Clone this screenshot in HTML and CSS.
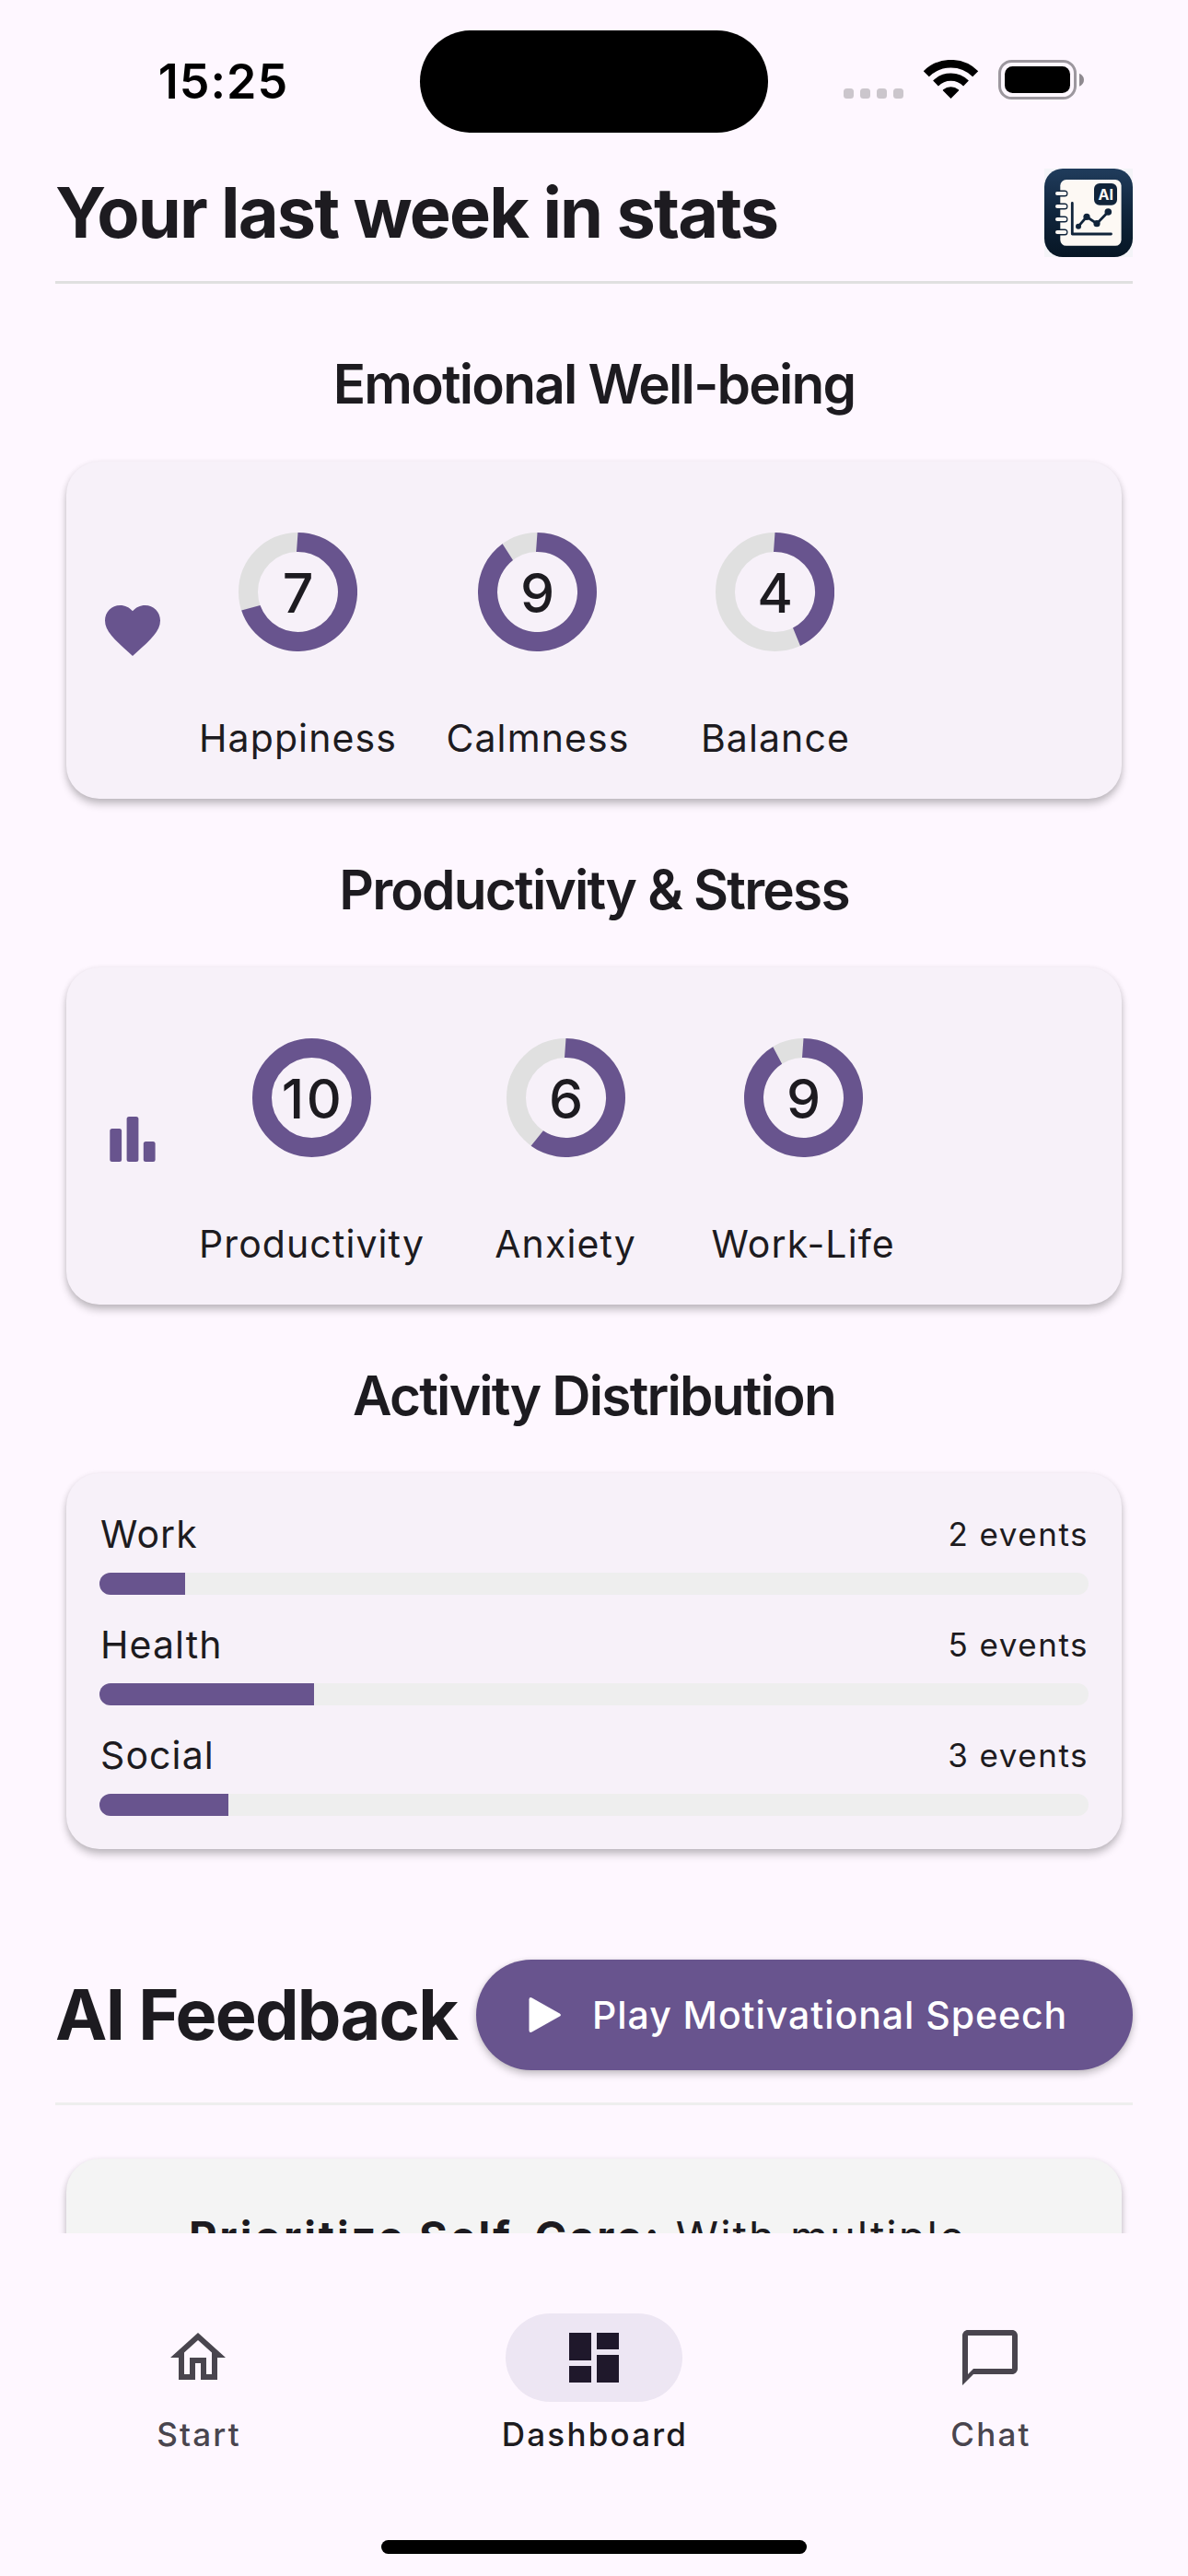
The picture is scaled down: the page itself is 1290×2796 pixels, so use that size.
FILE: index.html
```html
<!DOCTYPE html>
<html lang="en">
<head>
<meta charset="utf-8">
<title>Dashboard</title>
<link rel="stylesheet" href="styles.css">
</head>
<body>
<div class="screen">
  <div class="scroll">
    <div class="status">
      <div class="time">15:25</div>
      <div class="island"></div>
      <svg class="indicators" width="262" height="43" viewBox="0 0 262 43">
        <g fill="#cbc6cc">
          <rect x="0" y="31" width="11" height="11" rx="3.5"/>
          <rect x="18" y="31" width="11" height="11" rx="3.5"/>
          <rect x="36" y="31" width="11" height="11" rx="3.5"/>
          <rect x="54" y="31" width="11" height="11" rx="3.5"/>
        </g>
        <g transform="translate(88 0)">
          <path d="M1.8 15.3A37.7 37.7 0 0 1 55.2 15.3" fill="none" stroke="#000" stroke-width="8.6"/>
          <path d="M12 25.5A23.3 23.3 0 0 1 45 25.5" fill="none" stroke="#000" stroke-width="8.2"/>
          <path d="M28.5 42L19.8 33.3Q19.6 32.6 20.2 32.2A13.5 13.5 0 0 1 36.8 32.2Q37.4 32.6 37.2 33.3Z"/>
        </g>
        <rect x="169.5" y="1.5" width="82" height="40" rx="13" fill="none" stroke="#9c979e" stroke-width="3"/>
        <rect x="175" y="7" width="71" height="29" rx="8.5"/>
        <path d="M256 14.7Q261 17 261 21.7T256 28.7Z" fill="#8f8a90"/>
      </svg>
    </div>

    <header class="top">
      <h1 class="title">Your last week in stats</h1>
      <svg class="logo" width="96" height="96" viewBox="0 0 96 96">
        <defs>
          <linearGradient id="navy" x1="0" y1="0" x2="0" y2="1">
            <stop offset="0" stop-color="#203c5c"/>
            <stop offset=".5" stop-color="#10253c"/>
            <stop offset="1" stop-color="#071624"/>
          </linearGradient>
        </defs>
        <rect width="96" height="96" fill="#f4f4f8"/>
        <rect width="96" height="96" rx="20" fill="url(#navy)"/>
        <rect x="17.3" y="12" width="66.3" height="71.8" rx="6.5" fill="#fdf9f4"/>
        <g stroke="#10243a" stroke-width="7" stroke-linecap="round">
          <path d="M17 27H22M17 41H22M17 55H22M17 69H22"/>
        </g>
        <g stroke="#fdf9f4" stroke-width="4" stroke-linecap="round">
          <path d="M14 27H22.3M14 41H22.3M14 55H22.3M14 69H22.3"/>
        </g>
        <path d="M30.3 37.5V71H72.5" fill="none" stroke="#10243a" stroke-width="2.8" stroke-linecap="round" stroke-linejoin="round"/>
        <path d="M37 62.7L46 52.3L57 59.7L69.3 47" fill="none" stroke="#10243a" stroke-width="2.8"/>
        <g fill="#10243a">
          <circle cx="37" cy="62.7" r="3"/><circle cx="46" cy="52.3" r="3.6"/><circle cx="57" cy="59.7" r="3.6"/><circle cx="69.3" cy="47" r="3.8"/>
          <rect x="54" y="16" width="25" height="23.7" rx="6"/>
        </g>
        <text class="logo-text" x="66.7" y="33.8" text-anchor="middle">AI</text>
      </svg>
    </header>
    <div class="rule"></div>

    <h2 class="heading first">Emotional Well-being</h2>
    <section class="card metrics">
      <svg class="metric-icon" width="72" height="72" viewBox="0 0 24 24"><path d="M12 21.35l-1.45-1.32C5.4 15.36 2 12.28 2 8.5 2 5.42 4.42 3 7.5 3c1.74 0 3.41.81 4.5 2.09C13.09 3.81 14.76 3 16.5 3 19.58 3 22 5.42 22 8.5c0 3.78-3.4 6.86-8.55 11.54L12 21.35z"/></svg>
      <div class="metric">
        <svg class="ring" viewBox="0 0 129 129"><circle class="ring-track" cx="64.5" cy="64.5" r="54"/><path class="ring-value" d="M64.5 0A64.5 64.5 0 1 1 3.2 84.4L23.5 79A43.5 43.5 0 1 0 63 21Z"/><text class="ring-text" x="64.5" y="86.500">7</text></svg>
        <div class="label">Happiness</div>
      </div>
      <div class="metric">
        <svg class="ring" viewBox="0 0 129 129"><circle class="ring-track" cx="64.5" cy="64.5" r="54"/><path class="ring-value" d="M64.5 0A64.5 64.5 0 1 1 26.6 12.3L38 30A43.5 43.5 0 1 0 63 21Z"/><text class="ring-text" x="64.5" y="86.500">9</text></svg>
        <div class="label">Calmness</div>
      </div>
      <div class="metric">
        <svg class="ring" viewBox="0 0 129 129"><circle class="ring-track" cx="64.5" cy="64.5" r="54"/><path class="ring-value" d="M64.5 0A64.5 64.5 0 0 1 92 122.9L84 103.4A43.5 43.5 0 0 0 63 21Z"/><text class="ring-text" x="64.5" y="86.500">4</text></svg>
        <div class="label">Balance</div>
      </div>
    </section>

    <h2 class="heading">Productivity &amp; Stress</h2>
    <section class="card metrics">
      <svg class="metric-icon" width="72" height="72" viewBox="0 0 72 72"><rect x="11.3" y="28" width="12.8" height="36" rx="2.500"/><rect x="29.6" y="15" width="12.8" height="49" rx="2.500"/><rect x="47.8" y="42" width="12.8" height="22" rx="2.500"/></svg>
      <div class="metric">
        <svg class="ring" viewBox="0 0 129 129"><circle class="ring-full" cx="64.5" cy="64.5" r="54"/><text class="ring-text ring-text-wide" x="65.5" y="86.500">10</text></svg>
        <div class="label">Productivity</div>
      </div>
      <div class="metric">
        <svg class="ring" viewBox="0 0 129 129"><circle class="ring-track" cx="64.5" cy="64.5" r="54"/><path class="ring-value" d="M64.5 0A64.5 64.5 0 1 1 26.6 116.7L39.9 100.3A43.5 43.5 0 1 0 63 21Z"/><text class="ring-text" x="64.5" y="86.500">6</text></svg>
        <div class="label">Anxiety</div>
      </div>
      <div class="metric">
        <svg class="ring" viewBox="0 0 129 129"><circle class="ring-track" cx="64.5" cy="64.5" r="54"/><path class="ring-value" d="M64.5 0A64.5 64.5 0 1 1 31.3 9.2L41.1 27.8A43.5 43.5 0 1 0 63 21Z"/><text class="ring-text" x="64.5" y="86.500">9</text></svg>
        <div class="label">Work-Life</div>
      </div>
    </section>

    <h2 class="heading">Activity Distribution</h2>
    <section class="card activities">
      <div class="activity">
        <div class="activity-row"><span class="label">Work</span><span class="count">2 events</span></div>
        <div class="bar"><div class="bar-fill" style="width:8.7%"></div></div>
      </div>
      <div class="activity">
        <div class="activity-row"><span class="label">Health</span><span class="count">5 events</span></div>
        <div class="bar"><div class="bar-fill" style="width:21.74%"></div></div>
      </div>
      <div class="activity">
        <div class="activity-row"><span class="label">Social</span><span class="count">3 events</span></div>
        <div class="bar"><div class="bar-fill" style="width:13.04%"></div></div>
      </div>
    </section>

    <div class="feedback">
      <h1 class="title">AI Feedback</h1>
      <div class="play">
        <svg class="play-icon" width="36" height="40" viewBox="0 0 36 40"><path d="M.5 3.2V36.8Q.7 40 3.6 38.6L33.8 21.6Q36 20 33.8 18.4L3.6 1.4Q.7 0 .5 3.2Z" fill="#fff"/></svg>
        <span class="play-text">Play Motivational Speech</span>
      </div>
    </div>
    <div class="rule light"></div>

    <section class="card tips">
      <p class="tip"><b class="tip-strong">Prioritize Self-Care:</b> With multiple</p>
    </section>
  </div>

  <nav class="nav">
    <div class="nav-item">
      <div class="nav-pill"><svg width="72" height="72" viewBox="0 0 24 24"><path d="M12 5.69l5 4.5V18h-2v-6H9v6H7v-7.81l5-4.5M12 3L2 12h3v8h6v-6h2v6h6v-8h3L12 3z"/></svg></div>
      <div class="nav-label">Start</div>
    </div>
    <div class="nav-item selected">
      <div class="nav-pill"><svg width="72" height="72" viewBox="0 0 24 24"><path d="M3 13h8V3H3v10zm0 8h8v-6H3v6zm10 0h8V11h-8v10zm0-18v6h8V3h-8z"/></svg></div>
      <div class="nav-label">Dashboard</div>
    </div>
    <div class="nav-item">
      <div class="nav-pill"><svg width="72" height="72" viewBox="0 0 24 24"><path d="M20 2H4c-1.1 0-2 .9-2 2v18l4-4h14c1.1 0 2-.9 2-2V4c0-1.1-.9-2-2-2zm0 14H6l-2 2V4h16v12z"/></svg></div>
      <div class="nav-label">Chat</div>
    </div>
  </nav>
  <div class="home-bar"></div>
</div>
</body>
</html>
```
FILE: styles.css
```css
* { box-sizing: border-box; }

body {
  margin: 0;
  background: #fef7ff;
  color: #1d1b20;
  font-family: Inter, "Liberation Sans", sans-serif;
}

.screen {
  width: 1290px;
  height: 2796px;
  display: flex;
  flex-direction: column;
  overflow: hidden;
}

.scroll {
  height: 2424px;
  flex: none;
  overflow: hidden;
}

.status {
  display: grid;
  grid-template-columns: 456px 378px 456px;
  align-items: center;
  height: 111px;
  margin: 33px 0 39px;
}

.time {
  padding-left: 29px;
  text-align: center;
  font-size: 52px;
  font-weight: 600;
  letter-spacing: 1px;
  line-height: 60px;
  color: #000;
}

.island {
  height: 111px;
  border-radius: 56px;
  background: #000;
}

.indicators { margin: 0 0 4px 82px; }

.top {
  display: flex;
  justify-content: space-between;
  align-items: center;
  height: 96px;
  margin: 0 60px;
}

.title {
  margin: 0;
  font-size: 75.6px;
  font-weight: 700;
  letter-spacing: -1.8px;
  line-height: 96px;
  white-space: nowrap;
}

.logo-text {
  font-size: 16px;
  font-weight: 700;
  fill: #fdf9f4;
}

.rule {
  height: 3px;
  margin: 26px 60px 0;
  background: #e0e0e0;
}

.rule.light {
  margin-top: 35px;
  background: #eee;
}

.heading {
  margin: 57px 0 42px;
  text-align: center;
  font-size: 58.5px;
  font-weight: 600;
  letter-spacing: -1.8px;
  line-height: 84px;
}

.heading.first { margin-top: 67px; }

.card {
  margin: 0 72px;
  padding: 36px;
  border-radius: 36px;
  background: #f7f1f9;
  box-shadow: 0 6px 9px rgba(0, 0, 0, .22), 0 1px 6px rgba(0, 0, 0, .08);
}

.metrics {
  display: flex;
  align-items: center;
  height: 366px;
}

.metric-icon {
  margin-right: 36px;
  fill: #68548e;
}

.metric {
  min-width: 210px;
  margin-right: 48px;
  display: flex;
  flex-direction: column;
  align-items: center;
}

.ring {
  width: 129px;
  height: 129px;
  margin: 40.5px 0 64.5px;
}

.ring-track, .ring-full {
  fill: none;
  stroke: #e0e0e0;
  stroke-width: 21;
}

.ring-full { stroke: #68548e; }
.ring-value { fill: #68548e; }

.ring-text {
  font-size: 59px;
  font-weight: 550;
  text-anchor: middle;
  fill: #1d1b20;
}

.ring-text-wide { letter-spacing: 2.5px; }

.label {
  font-size: 41px;
  letter-spacing: 1.1px;
  line-height: 60px;
  white-space: nowrap;
}

.activities {
  display: flex;
  flex-direction: column;
  gap: 24px;
}

.activity-row {
  display: flex;
  justify-content: space-between;
  align-items: center;
  height: 60px;
  margin-bottom: 12px;
}

.activity-row .label { padding-left: 1px; }

.count {
  font-size: 35px;
  letter-spacing: 1.5px;
  line-height: 48px;
}

.bar {
  height: 24px;
  border-radius: 12px;
  overflow: hidden;
  background: #eee;
}

.bar-fill {
  height: 24px;
  background: #68548e;
}

.feedback {
  display: flex;
  justify-content: space-between;
  align-items: center;
  height: 120px;
  margin: 120px 60px 0;
}

.play {
  display: flex;
  align-items: center;
  width: 713px;
  height: 120px;
  padding-left: 57px;
  border-radius: 60px;
  background: #68548e;
  box-shadow: 0 4px 8px rgba(0, 0, 0, .24), 0 0 4px rgba(0, 0, 0, .06);
}

.play-icon { margin-right: 33px; }

.play-text {
  font-size: 41px;
  font-weight: 500;
  letter-spacing: .95px;
  color: #fff;
  white-space: nowrap;
}

.tips {
  margin-top: 58px;
  height: 300px;
  padding: 49px 120px 0 133px;
  background: #f4f4f4;
}

.tip {
  margin: 0;
  font-size: 47px;
  letter-spacing: 2px;
  line-height: 72px;
}

.tip-strong {
  font-weight: 700;
  letter-spacing: 2.85px;
}

.nav {
  display: grid;
  grid-template-columns: repeat(3, 430px);
  height: 333px;
  padding-top: 87px;
}

.nav-item {
  display: flex;
  flex-direction: column;
  align-items: center;
  color: #49454e;
  fill: #49454e;
}

.nav-pill {
  display: flex;
  justify-content: center;
  align-items: center;
  width: 192px;
  height: 96px;
  margin-bottom: 11px;
  border-radius: 48px;
}

.selected {
  color: #1d1b20;
  fill: #1f182b;
}

.selected .nav-pill { background: #ede6f3; }

.nav-label {
  padding-left: 2px;
  font-size: 35px;
  font-weight: 500;
  letter-spacing: 2.2px;
  line-height: 48px;
}

.home-bar {
  align-self: center;
  width: 462px;
  height: 15px;
  border-radius: 8px;
  background: #000;
}
```
